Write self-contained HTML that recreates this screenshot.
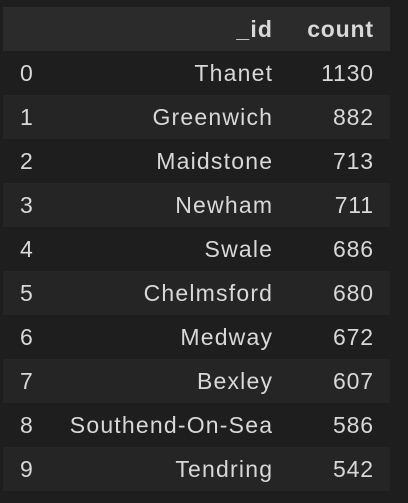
<!DOCTYPE html>
<html><head><style>
body{margin:0;background:#1e1e1e;width:408px;height:503px;overflow:hidden;font-family:"Liberation Sans",sans-serif;color:#d8d8d8;}
.t{position:absolute;left:3px;top:7px;width:387px;}
.r{position:relative;height:44px;font-size:23px;line-height:44px;}
.r span{position:absolute;top:0;}
.i{left:17px}
.n{right:118px;letter-spacing:1.2px;margin-right:-1.2px}
.c{right:17px;letter-spacing:0.8px;margin-right:-0.8px}
.h{background:#2b2b2b;font-weight:bold;}
.s{background:#252525;}
</style></head><body>
<div class="t">
<div class="r h"><span class="n">_id</span><span class="c">count</span></div>
<div class="r"><span class="i">0</span><span class="n">Thanet</span><span class="c">1130</span></div>
<div class="r s"><span class="i">1</span><span class="n">Greenwich</span><span class="c">882</span></div>
<div class="r"><span class="i">2</span><span class="n">Maidstone</span><span class="c">713</span></div>
<div class="r s"><span class="i">3</span><span class="n">Newham</span><span class="c">711</span></div>
<div class="r"><span class="i">4</span><span class="n">Swale</span><span class="c">686</span></div>
<div class="r s"><span class="i">5</span><span class="n">Chelmsford</span><span class="c">680</span></div>
<div class="r"><span class="i">6</span><span class="n">Medway</span><span class="c">672</span></div>
<div class="r s"><span class="i">7</span><span class="n">Bexley</span><span class="c">607</span></div>
<div class="r"><span class="i">8</span><span class="n">Southend-On-Sea</span><span class="c">586</span></div>
<div class="r s"><span class="i">9</span><span class="n">Tendring</span><span class="c">542</span></div>
</div>
</body></html>
